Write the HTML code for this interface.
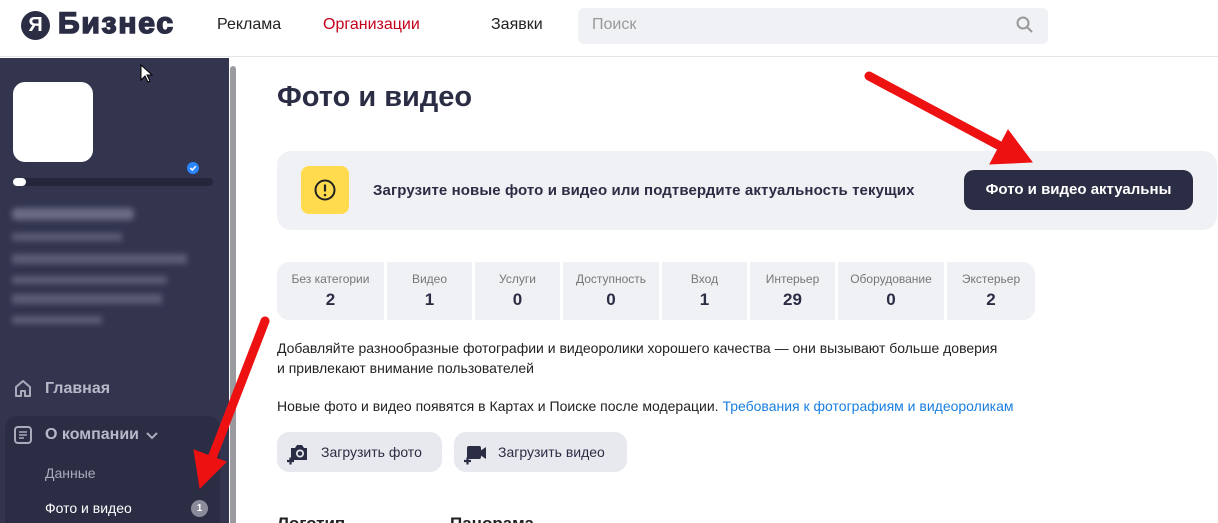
<!DOCTYPE html>
<html><head><meta charset="utf-8"><style>
*{box-sizing:border-box;margin:0;padding:0}
html,body{width:1218px;height:523px;overflow:hidden}
body{background:#fff;font-family:"Liberation Sans","Noto Sans CJK SC",sans-serif;position:relative;color:#222}
.hdr{position:absolute;left:0;top:0;width:1218px;height:57px;border-bottom:1px solid #e6e6ea;background:#fff}
.abs{position:absolute}
.side{position:absolute;left:0;top:58px;width:229px;height:465px;background:#33354f;overflow:hidden}
.sb{position:absolute;left:229px;top:58px;width:8px;height:465px;background:#fff}
.sb div{position:absolute;left:1px;top:8px;width:6px;height:460px;background:#9a9aa0;border-radius:3px}
.tab{position:absolute;top:262px;height:58px;background:#f0f1f4;text-align:center;font-size:12px;color:#777}
.tab b{display:block;font-size:17px;color:#2b2d45;margin-top:4px}
</style></head><body>
<div class="hdr">
 <div class="abs" style="left:21px;top:11px;width:29px;height:29px;border-radius:50%;background:#2b2d45;color:#fff;font-weight:bold;font-size:20px;text-align:center;line-height:29px">Я</div>
 <div class="abs" style="left:58px;top:7px;font-size:30px;font-weight:bold;color:#2b2d45;-webkit-text-stroke:1.6px #2b2d45;letter-spacing:1.8px">Бизнес</div>
 <div class="abs" style="left:217px;top:16px;font-size:16px;color:#222">Реклама</div>
 <div class="abs" style="left:323px;top:16px;font-size:16px;color:#c4001a">Организации</div>
 <div class="abs" style="left:491px;top:16px;font-size:16px;color:#222">Заявки</div>
 <div class="abs" style="left:578px;top:8px;width:470px;height:36px;background:#f0f1f4;border-radius:6px"></div>
 <div class="abs" style="left:592px;top:16px;font-size:16px;color:#999">Поиск</div>
 <svg class="abs" style="left:1016px;top:16px" width="18" height="18"><circle cx="7" cy="7" r="5.5" fill="none" stroke="#999" stroke-width="2"/><path d="M11 11l5 5" stroke="#999" stroke-width="2"/></svg>
</div>
<div class="side">
 <div class="abs" style="left:13px;top:24px;width:80px;height:80px;background:#fff;border-radius:12px"></div>
 <div class="abs" style="left:13px;top:120px;width:200px;height:8px;background:#24263b;border-radius:4px"></div>
 <div class="abs" style="left:13px;top:120px;width:13px;height:8px;background:#fff;border-radius:4px"></div>
 <svg class="abs" style="left:187px;top:104px" width="12" height="12"><circle cx="6" cy="6" r="6" fill="#2a86ff"/><path d="M3.3 6l2 2 3.5-3.8" fill="none" stroke="#fff" stroke-width="1.5"/></svg>
 <div class="abs" style="left:12px;top:150px;width:122px;height:12px;background:#6a6c84;border-radius:4px;filter:blur(3px)"></div>
 <div class="abs" style="left:12px;top:175px;width:110px;height:8px;background:#5a5c74;filter:blur(3px)"></div>
 <div class="abs" style="left:12px;top:196px;width:175px;height:10px;background:#5a5c74;filter:blur(3px)"></div>
 <div class="abs" style="left:12px;top:218px;width:155px;height:8px;background:#5a5c74;filter:blur(3px)"></div>
 <div class="abs" style="left:12px;top:236px;width:150px;height:10px;background:#5a5c74;filter:blur(3px)"></div>
 <div class="abs" style="left:12px;top:258px;width:90px;height:8px;background:#5a5c74;filter:blur(3px)"></div>
 <svg class="abs" style="left:13px;top:321px" width="20" height="20"><path d="M3 17V8l7-6 7 6v9h-5v-5H8v5z" fill="none" stroke="#aaaabb" stroke-width="2" stroke-linejoin="round"/></svg>
 <div class="abs" style="left:45px;top:322px;font-size:16px;font-weight:bold;color:#b8b9c8">Главная</div>
 <div class="abs" style="left:5px;top:358px;width:215px;height:130px;background:#2b2d45;border-radius:12px"></div>
 <svg class="abs" style="left:13px;top:367px" width="20" height="20"><rect x="2" y="2" width="16" height="16" rx="3" fill="none" stroke="#aaaabb" stroke-width="2"/><path d="M6 7h8M6 10h8M6 13h5" stroke="#aaaabb" stroke-width="1.6"/></svg>
 <div class="abs" style="left:45px;top:368px;font-size:16px;font-weight:bold;color:#b8b9c8">О компании</div>
 <svg class="abs" style="left:145px;top:373px" width="14" height="10"><path d="M2 2l5 5 5-5" fill="none" stroke="#aaaabb" stroke-width="2"/></svg>
 <div class="abs" style="left:45px;top:407px;font-size:14px;color:#aaaabb">Данные</div>
 <div class="abs" style="left:45px;top:442px;font-size:14px;color:#fff">Фото и видео</div>
 <div class="abs" style="left:191px;top:442px;width:17px;height:17px;border-radius:50%;background:#8a8b9a;color:#fff;font-size:10px;font-weight:bold;text-align:center;line-height:17px">1</div>
</div>
<div class="sb"><div></div></div>
<div class="abs" style="left:277px;top:81px;font-size:29px;font-weight:bold;color:#2b2d45">Фото и видео</div>
<div class="abs" style="left:277px;top:151px;width:940px;height:79px;background:#f0f1f4;border-radius:14px"></div>
<div class="abs" style="left:301px;top:166px;width:48px;height:48px;background:#ffdb4d;border-radius:8px"></div>
<svg class="abs" style="left:313px;top:178px" width="24" height="24"><circle cx="12" cy="12" r="9.5" fill="none" stroke="#222" stroke-width="2"/><path d="M12 6.5v7" stroke="#222" stroke-width="2.2"/><circle cx="12" cy="17" r="1.3" fill="#222"/></svg>
<div class="abs" style="left:373px;top:182px;font-size:15px;font-weight:bold;color:#2b2d45;letter-spacing:0.1px">Загрузите новые фото и видео или подтвердите актуальность текущих</div>
<div class="abs" style="left:964px;top:170px;width:229px;height:40px;background:#2b2d45;border-radius:10px;color:#fff;font-size:15px;font-weight:bold;text-align:center;line-height:40px">Фото и видео актуальны</div>
<div class="tab" style="left:277px;width:107px;border-radius:12px 0 0 12px;padding-top:10px">Без категории<b>2</b></div>
<div class="tab" style="left:387px;width:85px;padding-top:10px">Видео<b>1</b></div>
<div class="tab" style="left:475px;width:85px;padding-top:10px">Услуги<b>0</b></div>
<div class="tab" style="left:563px;width:96px;padding-top:10px">Доступность<b>0</b></div>
<div class="tab" style="left:662px;width:85px;padding-top:10px">Вход<b>1</b></div>
<div class="tab" style="left:750px;width:85px;padding-top:10px">Интерьер<b>29</b></div>
<div class="tab" style="left:838px;width:106px;padding-top:10px">Оборудование<b>0</b></div>
<div class="tab" style="left:947px;width:88px;border-radius:0 12px 12px 0;padding-top:10px">Экстерьер<b>2</b></div>
<div class="abs" style="left:277px;top:338px;font-size:14px;line-height:20px;color:#222">Добавляйте разнообразные фотографии и видеоролики хорошего качества — они вызывают больше доверия<br>и привлекают внимание пользователей</div>
<div class="abs" style="left:277px;top:398px;font-size:14px;color:#222">Новые фото и видео появятся в Картах и Поиске после модерации. <span style="color:#1a7fe0">Требования к фотографиям и видеороликам</span></div>
<div class="abs" style="left:277px;top:432px;width:165px;height:40px;background:#e8e9ee;border-radius:12px"></div>
<svg class="abs" style="left:286px;top:440px" width="26" height="26"><path d="M5 8h4l2-3h5l2 3h3v12H5z" fill="#2b2d45"/><circle cx="14" cy="13.5" r="4" fill="#e8e9ee"/><circle cx="14" cy="13.5" r="2.3" fill="#2b2d45"/><path d="M1 21h7M4.5 17.5v7" stroke="#2b2d45" stroke-width="2.2"/></svg>
<div class="abs" style="left:321px;top:444px;font-size:14px;color:#2b2d45">Загрузить фото</div>
<div class="abs" style="left:454px;top:432px;width:173px;height:40px;background:#e8e9ee;border-radius:12px"></div>
<svg class="abs" style="left:463px;top:440px" width="26" height="26"><rect x="4" y="6" width="14" height="13" rx="2" fill="#2b2d45"/><path d="M17 11l6-4v12l-6-4z" fill="#2b2d45"/><path d="M1 21h7M4.5 17.5v7" stroke="#2b2d45" stroke-width="2.2"/></svg>
<div class="abs" style="left:498px;top:444px;font-size:14px;color:#2b2d45">Загрузить видео</div>
<div class="abs" style="left:277px;top:514px;font-size:17px;font-weight:bold;color:#222">Логотип</div>
<div class="abs" style="left:450px;top:514px;font-size:17px;font-weight:bold;color:#222">Панорама</div>
<svg class="abs" style="left:0;top:0" width="1218" height="523"><g fill="#ee1111" stroke="#ee1111"><path d="M869 76L1000 146" stroke-width="9" stroke-linecap="round"/><path d="M1032 162L990 164L1008 130z"/><path d="M265 321L212 458" stroke-width="9" stroke-linecap="round"/><path d="M200 488L194 450L226 462z"/></g></svg>
<svg class="abs" style="left:140px;top:64px" width="14" height="20"><path d="M1 1v15l4-4 3 6 2-1-3-6h5z" fill="#fff" stroke="#000"/></svg>
</body></html>
